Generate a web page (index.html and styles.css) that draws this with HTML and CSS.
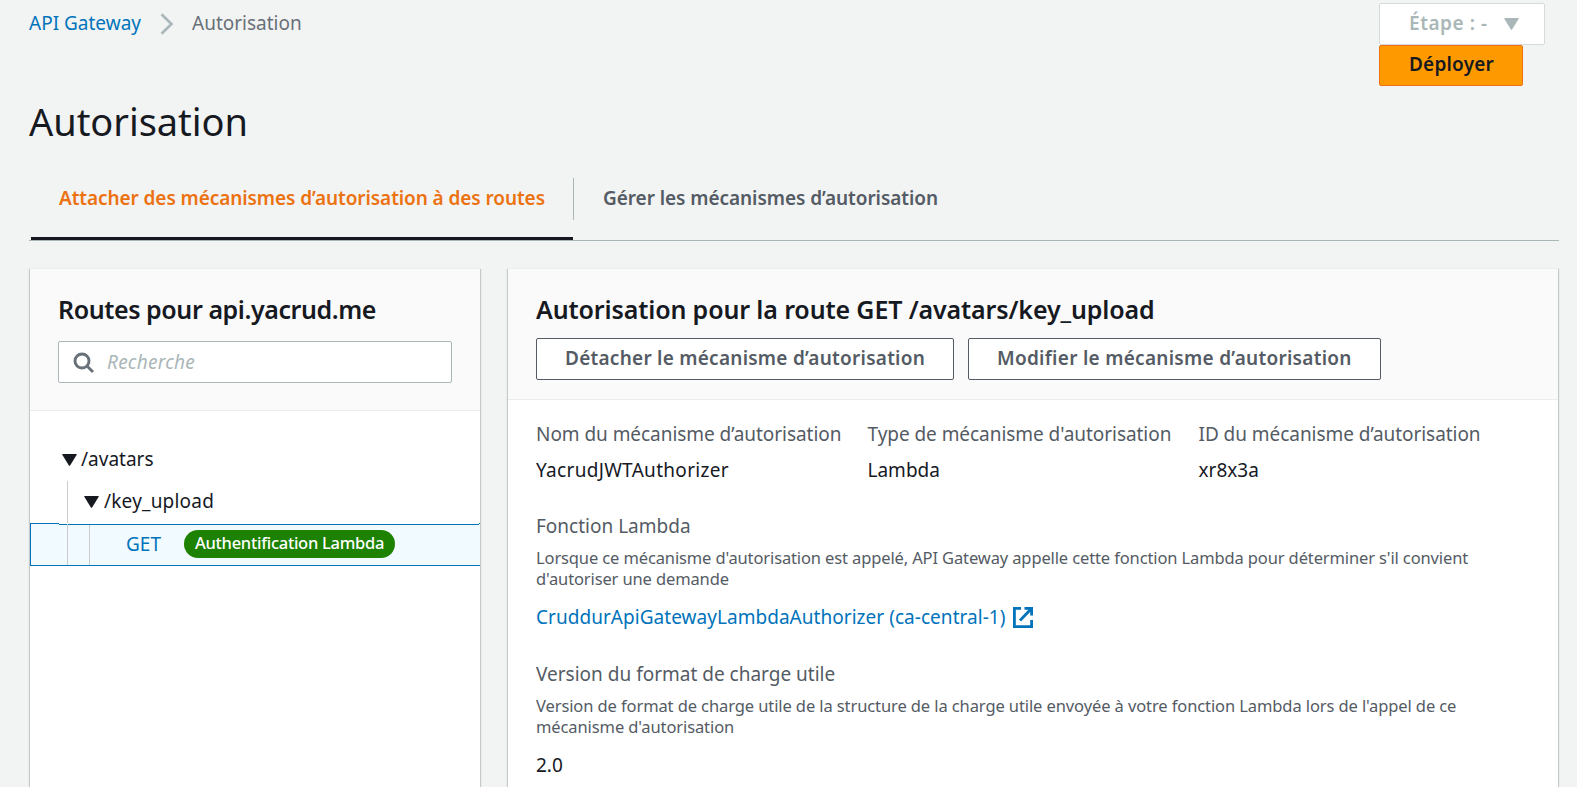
FILE: index.html
```html
<!DOCTYPE html>
<html lang="fr">
<head>
<meta charset="utf-8">
<title>Autorisation - API Gateway</title>
<link rel="stylesheet" href="styles.css">
</head>
<body>
<header class="topbar">
  <nav class="crumbs">
    <a class="link crumb-home" href="#">API Gateway</a>
    <svg class="chevron" viewBox="0 0 14 22"><path d="M1.5 1.2 11.5 11 1.5 20.8" fill="none" stroke="#aab7b8" stroke-width="2.6"/></svg>
    <span class="crumb-current">Autorisation</span>
  </nav>
  <div class="actions">
    <button class="btn btn-stage" disabled><span>Étape : -</span><svg class="caret" viewBox="0 0 15 12"><path d="M.8 0h13.4q.8 0 .5.7L8.1 11.4q-.6.9-1.2 0L.3.7Q0 0 .8 0z" fill="currentColor"/></svg></button>
    <button class="btn btn-primary"><span>Déployer</span></button>
  </div>
</header>
<h1 class="page-title">Autorisation</h1>
<div class="tabs">
  <a class="tab tab-active">Attacher des mécanismes d’autorisation à des routes</a>
  <a class="tab tab-second">Gérer les mécanismes d’autorisation</a>
</div>
<main class="panels">
  <section class="panel">
    <div class="panel-head head-routes">
      <h2 class="panel-title title-routes">Routes pour api.yacrud.me</h2>
      <div class="search">
        <svg class="search-icon" viewBox="0 0 22 22"><circle cx="9" cy="9" r="7" fill="none" stroke="#687078" stroke-width="2.9"/><path d="M14 14l6 6" stroke="#687078" stroke-width="2.9"/></svg>
        <span class="placeholder">Recherche</span>
      </div>
    </div>
    <div class="tree">
      <div class="row row-root"><svg class="caret" viewBox="0 0 15 12"><path d="M.8 0h13.4q.8 0 .5.7L8.1 11.4q-.6.9-1.2 0L.3.7Q0 0 .8 0z" fill="currentColor"/></svg><span>/avatars</span></div>
      <div class="row row-child"><i class="guide"></i><svg class="caret" viewBox="0 0 15 12"><path d="M.8 0h13.4q.8 0 .5.7L8.1 11.4q-.6.9-1.2 0L.3.7Q0 0 .8 0z" fill="currentColor"/></svg><span class="child-name">/key_upload</span></div>
      <div class="row row-selected"><i class="guide"></i><i class="guide guide-2"></i><span class="method">GET</span><span class="badge">Authentification Lambda</span></div>
    </div>
  </section>
  <section class="panel">
    <div class="panel-head head-auth">
      <h2 class="panel-title title-auth">Autorisation pour la route GET /avatars/key_upload</h2>
      <div class="buttons">
        <button class="btn btn-detach">Détacher le mécanisme d’autorisation</button>
        <button class="btn btn-edit">Modifier le mécanisme d’autorisation</button>
      </div>
    </div>
    <div class="details">
      <div class="cols">
        <div><div class="label">Nom du mécanisme d’autorisation</div><div class="value v-name">YacrudJWTAuthorizer</div></div>
        <div><div class="label">Type de mécanisme d'autorisation</div><div class="value">Lambda</div></div>
        <div><div class="label">ID du mécanisme d’autorisation</div><div class="value">xr8x3a</div></div>
      </div>
      <div class="field">
        <div class="label l-plain">Fonction Lambda</div>
        <p class="hint">Lorsque ce mécanisme d'autorisation est appelé, API Gateway appelle cette fonction Lambda pour déterminer s'il convient<br>d'autoriser une demande</p>
        <a class="link fn-link" href="#"><span>CruddurApiGatewayLambdaAuthorizer (ca-central-1)</span><svg class="ext" viewBox="0 0 20 21"><path d="M8 1.4H1.4v18.2h17.2V13M11.5 1.4h7.1v7.1M18 2 7 13.5" fill="none" stroke="currentColor" stroke-width="2.8"/></svg></a>
      </div>
      <div class="field field-version">
        <div class="label l-plain">Version du format de charge utile</div>
        <p class="hint hint-version">Version de format de charge utile de la structure de la charge utile envoyée à votre fonction Lambda lors de l'appel de ce<br>mécanisme d'autorisation</p>
        <div class="value">2.0</div>
      </div>
    </div>
  </section>
</main>
</body>
</html>
```
FILE: styles.css
```css
* { box-sizing: border-box; }
body { margin: 0; height: 787px; overflow: hidden; background: #f2f3f3; color: #16191f; font: 19px/26px "Noto Sans", "Open Sans", sans-serif; }
h1, h2, p { margin: 0; }
a { text-decoration: none; color: inherit; }
svg { display: block; flex: none; }
.link { color: #0073bb; }
.topbar { display: flex; justify-content: space-between; height: 97px; padding: 3px 32px 0 29px; }
.crumbs { display: flex; height: 26px; margin-top: 7px; }
.chevron { width: 14px; height: 22px; margin: 3px 18px 0 19px; }
.crumb-current { color: #687078; }
.actions { width: 166px; display: flex; flex-direction: column; align-items: flex-start; }
.btn { display: flex; align-items: flex-start; height: 42px; margin: 0; padding: 6px 28px 0; border: 1px solid #545b64; border-radius: 2px; background: #fff; color: #545b64; font: 600 19px/26px "Noto Sans", sans-serif; white-space: nowrap; }
.btn-stage { width: 166px; padding-left: 29px; border-color: #d5dbdb; color: #aab7b8; letter-spacing: .55px; }
.btn-stage .caret { margin: 8px -3px 0 auto; }
.btn-primary { width: 144px; height: 41px; padding: 5px 29px 0; border-color: #ec7211; background: #ff9900; color: #16191f; letter-spacing: .2px; }
.btn-detach { width: 418px; letter-spacing: .25px; }
.btn-edit { width: 413px; letter-spacing: .28px; }
.caret { width: 15px; height: 12px; }
.page-title { padding-left: 29px; font-size: 38px; line-height: 48px; font-weight: 400; letter-spacing: -.05px; }
.tabs { display: flex; height: 63px; margin: 33px 18px 0 29px; padding-left: 2px; border-bottom: 1px solid #aab7b8; font-weight: 600; }
.tab { padding: 7px 28px 0; white-space: nowrap; }
.tab-active { width: 542px; border-bottom: 3px solid #16191f; color: #ec7211; letter-spacing: -.08px; }
.tab-second { height: 42px; padding-left: 29px; border-left: 1px solid #aab7b8; color: #545b64; letter-spacing: -.06px; }
.panels { display: grid; grid-template-columns: 450px 1050px; gap: 28px; height: 519px; margin: 27px 0 0 30px; }
.panel { background: #fff; border-top: 1px solid #eaeded; box-shadow: 0 1px 1px 0 rgba(0,28,36,.3), 1px 1px 1px 0 rgba(0,28,36,.15), -1px 1px 1px 0 rgba(0,28,36,.15); }
.panel-head { padding: 24px 28px 0; background: #fafafa; border-bottom: 1px solid #eaeded; }
.head-routes { height: 142px; }
.head-auth { height: 131px; }
.panel-title { font-size: 25px; line-height: 32px; font-weight: 600; white-space: nowrap; }
.title-routes { letter-spacing: -.42px; }
.title-auth { letter-spacing: -.13px; }
.search { display: flex; width: 394px; height: 42px; margin-top: 16px; padding: 7px 14px; border: 1px solid #aab7b8; border-radius: 2px; background: #fff; }
.search-icon { width: 22px; height: 22px; margin-top: 3px; }
.placeholder { margin-left: 12px; color: #aab7b8; font-style: italic; letter-spacing: .25px; }
.tree { padding-top: 28px; }
.row { position: relative; display: flex; height: 42px; padding-top: 7px; }
.row .caret { margin: 8px 4px 0 0; }
.row-root { padding-left: 32px; }
.row-child { padding-left: 54px; }
.child-name { margin-left: 1px; letter-spacing: .2px; }
.guide { position: absolute; left: 37px; top: 0; width: 1px; height: 42px; background: #ccc; }
.row-selected { height: 43px; padding-left: 95px; border: solid #0073bb; border-width: 1px 0 1px 1px; background: #f1faff; }
/* the outline steps down one pixel past the indent */
.row-selected::before { content: ""; position: absolute; left: 28px; right: 1px; top: -1px; height: 2px; background: linear-gradient(#fff 50%, #0073bb 50%); }
.row-selected .guide { left: 36px; height: 41px; }
.row-selected .guide-2 { left: 58px; top: 1px; height: 40px; }
.method { color: #0073bb; }
.badge { height: 28px; margin: -1px 0 0 23px; padding: 0 11px; border-radius: 14px; background: #1d8102; color: #fff; font-size: 16.5px; font-weight: 500; letter-spacing: -.28px; }
.buttons { display: flex; gap: 14px; margin-top: 13px; }
.details { padding: 21px 28px 0; }
.cols { display: grid; grid-template-columns: 331.5px 331px 331px; }
.label { color: #545b64; letter-spacing: -.05px; }
.l-plain { letter-spacing: 0; }
.cols .value { margin-top: 10px; }
.v-name { letter-spacing: .3px; }
.field { margin-top: 30px; }
.field-version { margin-top: 31px; }
.hint { margin: 8px 0 15px; color: #545b64; font-size: 16.5px; line-height: 21px; letter-spacing: -.125px; white-space: nowrap; }
.hint-version { letter-spacing: -.1px; }
.fn-link { display: flex; letter-spacing: .04px; }
.ext { width: 20px; height: 21px; margin: 3px 0 0 7px; }
```
